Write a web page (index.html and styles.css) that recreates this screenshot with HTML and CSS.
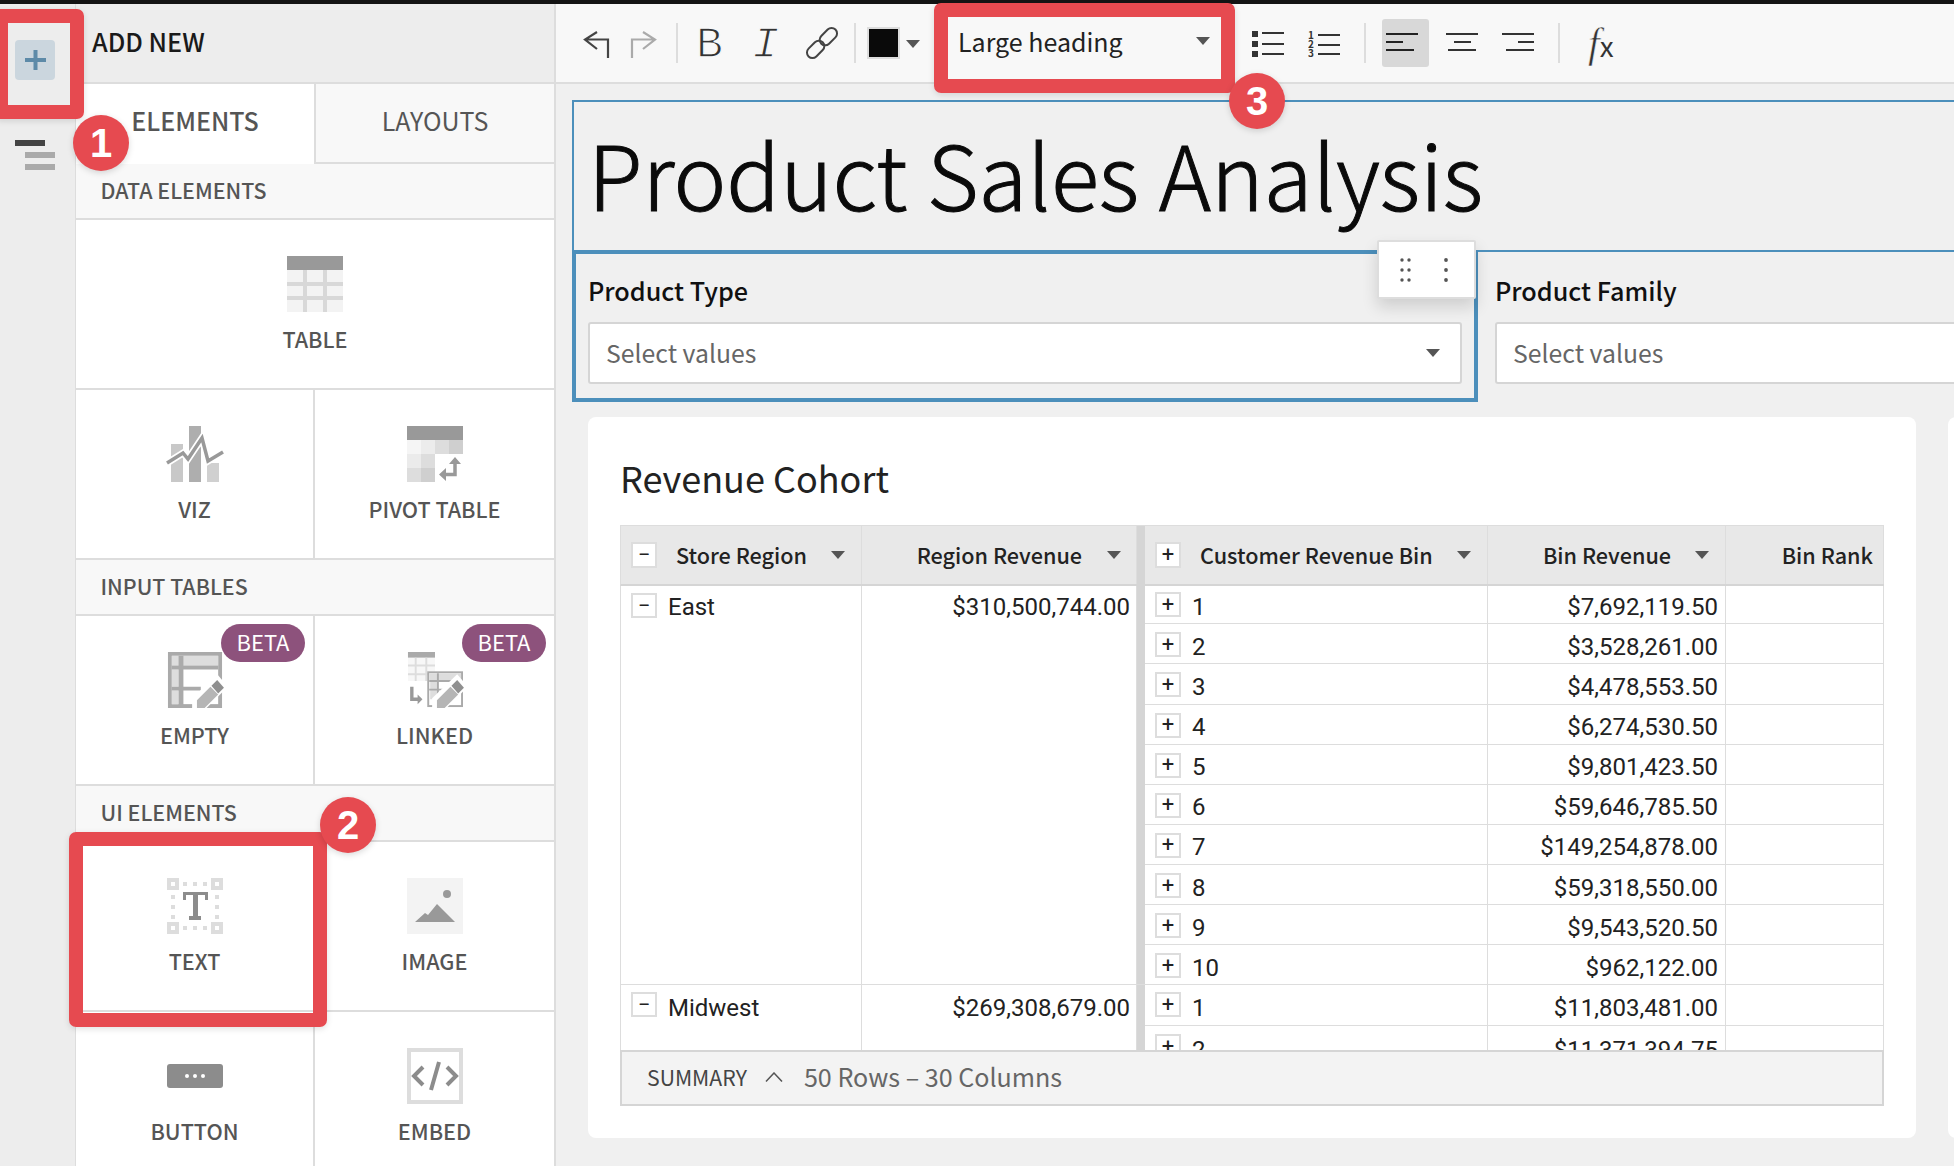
FILE: index.html
```html
<!DOCTYPE html>
<html lang="en">
<head>
<meta charset="utf-8">
<title>Product Sales Analysis</title>
<link rel="stylesheet" href="styles.css">
</head>
<body>
<div class="topbar"></div>
<div class="app">
  <nav class="rail">
    <div class="add-btn"><svg width="21" height="20" viewBox="0 0 21 20"><path d="M8.5 0h4v8h8.500v4h-8.500v8h-4v-8H0V8h8.500z" fill="#5d8aa8"/></svg></div>
    <div class="outline-icon"><span class="ol-dark"></span><span class="ol-gray"></span><span class="ol-gray"></span></div>
  </nav>
  <aside class="panel">
    <header class="panel-head">ADD NEW</header>
    <div class="tabs"><div class="tab tab-on">ELEMENTS</div><div class="tab">LAYOUTS</div></div>
    <div class="sec">DATA ELEMENTS</div>
    <div class="grid">
      <div class="cell wide">
        <svg class="ico" width="56" height="56" viewBox="0 0 56 56"><rect width="56" height="56" fill="#f3f3f3"/><rect width="56" height="14" fill="#999"/><path d="M16 14h4v42h-4zM36 14h4v42h-4zM0 26h56v4H0zM0 40h56v4H0z" fill="#d8d8d8"/></svg>
        <div class="lbl">TABLE</div>
      </div>
      <div class="cell">
        <svg class="ico" width="58" height="56" viewBox="0 0 58 56"><rect x="5" y="18" width="12" height="38" fill="#c8c8c8"/><rect x="23" width="12" height="56" fill="#aeaeae"/><rect x="41" y="37" width="12" height="19" fill="#d0d0d0"/><path d="M1 37L17 27 22 33 36 12 42 35 57 26" fill="none" stroke="#fff" stroke-width="7"/><path d="M1 37L17 27 22 33 36 12 42 35 57 26" fill="none" stroke="#999" stroke-width="3.500"/></svg>
        <div class="lbl">VIZ</div>
      </div>
      <div class="cell">
        <svg class="ico" width="56" height="56" viewBox="0 0 56 56"><rect width="56" height="14" fill="#999"/><rect y="14" width="14" height="14" fill="#f5f5f5"/><rect x="14" y="14" width="14" height="14" fill="#ececec"/><rect x="28" y="14" width="14" height="14" fill="#ddd"/><rect x="42" y="14" width="14" height="14" fill="#cfcfcf"/><rect y="28" width="14" height="14" fill="#ebebeb"/><rect x="14" y="28" width="14" height="14" fill="#ddd"/><rect y="42" width="14" height="14" fill="#ddd"/><rect x="14" y="42" width="14" height="14" fill="#cfcfcf"/><path d="M36 48.500h12V37" fill="none" stroke="#999" stroke-width="3.500"/><path d="M42 38l6-7 6 7zM39 42v13l-7-6.500z" fill="#999"/></svg>
        <div class="lbl">PIVOT TABLE</div>
      </div>
    </div>
    <div class="sec">INPUT TABLES</div>
    <div class="grid">
      <div class="cell">
        <span class="beta">BETA</span>
        <svg class="ico" width="56" height="58" viewBox="0 0 56 58"><rect x="2" y="2" width="52" height="54" fill="#fff" stroke="#aaa" stroke-width="4"/><path d="M4 4h48v10H4zM4 18h7v18H4zM4 40h7v14H4z" fill="#ddd"/><path d="M11 4h5v52h-5zM4 14h48v4H4zM4 36h30v4H4z" fill="#aaa"/><path d="M25 58V48L51 23l11 13-22 22z" fill="#fff"/><path d="M30 58v-8l14-14 8 8-14 14z" fill="#b5b5b5"/><path d="M45 35l6-6 7 8-6 6z" fill="#8f8f8f"/></svg>
        <div class="lbl">EMPTY</div>
      </div>
      <div class="cell">
        <span class="beta">BETA</span>
        <svg class="ico" width="56" height="58" viewBox="0 0 56 58"><rect width="28" height="6" fill="#aaa"/><rect y="6" width="28" height="24" fill="#f7f7f7"/><path d="M0 13h28v2H0zM0 22h28v2H0zM7 6h2v24H7zM18 6h2v24h-2z" fill="#ddd"/><path d="M4 36v13h7" fill="none" stroke="#999" stroke-width="3.500"/><path d="M10 44l5 5-5 5z" fill="#999"/><rect x="21" y="21" width="35" height="35" fill="#fff" stroke="#aaa" stroke-width="2"/><path d="M22 22h33v7H22zM23 30h7v19h-7z" fill="#ddd"/><path d="M30 22h2v34h-2zM22 38h22v2H22zM22 29h33v2H22z" fill="#aaa"/><path d="M25 58V48L51 23l11 13-22 22z" fill="#fff"/><path d="M30 58v-8l14-14 8 8-14 14z" fill="#b5b5b5"/><path d="M45 35l6-6 7 8-6 6z" fill="#8f8f8f"/></svg>
        <div class="lbl">LINKED</div>
      </div>
    </div>
    <div class="sec">UI ELEMENTS</div>
    <div class="grid">
      <div class="cell">
        <svg class="ico" width="56" height="56" viewBox="0 0 56 56"><path d="M0 0h12v12H0zM44 0h12v12H44zM0 44h12v12H0zM44 44h12v12H44z" fill="#ddd"/><path d="M4 4h4v4H4zM48 4h4v4h-4zM4 48h4v4H4zM48 48h4v4h-4z" fill="#fff"/><path d="M16 4h4v4h-4zM26 4h4v4h-4zM36 4h4v4h-4zM16 48h4v4h-4zM26 48h4v4h-4zM36 48h4v4h-4zM4 17h4v4H4zM4 27h4v4H4zM4 37h4v4H4zM48 17h4v4h-4zM48 27h4v4h-4zM48 37h4v4h-4z" fill="#ddd"/><path d="M16 14h25v3H16zM16 14h3v8h-3zM38 14h3v8h-3zM26 14h5v28h-5zM22 38h12v4H22z" fill="#8c8c8c"/></svg>
        <div class="lbl">TEXT</div>
      </div>
      <div class="cell">
        <svg class="ico" width="56" height="56" viewBox="0 0 56 56"><rect width="56" height="56" fill="#f3f3f3"/><circle cx="40" cy="16" r="4" fill="#999"/><path d="M8 44l10-9 3 2 9-11 18 18z" fill="#999"/></svg>
        <div class="lbl">IMAGE</div>
      </div>
      <div class="cell">
        <svg class="ico" width="56" height="56" viewBox="0 0 56 56"><rect y="16" width="56" height="24" rx="3" fill="#8c8c8c"/><circle cx="20" cy="28" r="2" fill="#fff"/><circle cx="28" cy="28" r="2" fill="#fff"/><circle cx="36" cy="28" r="2" fill="#fff"/></svg>
        <div class="lbl">BUTTON</div>
      </div>
      <div class="cell">
        <svg class="ico" width="56" height="56" viewBox="0 0 56 56"><rect x="2" y="2" width="52" height="52" fill="#fff" stroke="#ddd" stroke-width="4"/><path d="M16 19l-9 9 9 9M40 19l9 9-9 9M32 14l-8 28" fill="none" stroke="#8c8c8c" stroke-width="4"/></svg>
        <div class="lbl">EMBED</div>
      </div>
    </div>
  </aside>
  <main class="main">
    <div class="toolbar">
      <svg class="t-undo" width="28" height="28" viewBox="0 0 28 28"><path d="M15 2L3 9.500 15 19M3 9.500h23V28" transform="translate(0 -1)" fill="none" stroke="#444" stroke-width="2.200"/></svg>
      <svg class="t-redo" width="28" height="28" viewBox="0 0 28 28"><path d="M13 2l12 7.500L13 19M25 9.500H2V28" transform="translate(0 -1)" fill="none" stroke="#aaa" stroke-width="2.200"/></svg>
      <span class="t-sep t-sep1"></span>
      <span class="t-b">B</span>
      <span class="t-i">I</span>
      <svg class="t-link" width="36" height="36" viewBox="0 0 36 36"><g fill="none" stroke="#444" stroke-width="2" transform="rotate(-45 18 18)"><rect x="-1" y="12.500" width="20" height="11" rx="5.500"/><rect x="17" y="12.500" width="20" height="11" rx="5.500"/></g></svg>
      <span class="t-sep t-sep2"></span>
      <span class="swatch"></span><span class="caret t-caret"></span>
      <div class="heading-sel"><span>Large heading</span><span class="caret"></span></div>
      <svg class="t-ul" width="32" height="26" viewBox="0 0 32 26"><path d="M0 0h6v6H0zM0 10h6v6H0zM0 20h6v6H0z" fill="#333"/><path d="M10 1h22v2H10zM10 12h22v2H10zM10 22h22v2H10z" fill="#333"/></svg>
      <svg class="t-ol" width="32" height="28" viewBox="0 0 32 28"><text x="0" y="9" class="ol-num">1</text><text x="0" y="18" class="ol-num">2</text><text x="0" y="27" class="ol-num">3</text><path d="M10 4h22v2H10zM10 14h22v2H10zM10 23h22v2H10z" fill="#333"/></svg>
      <span class="t-sep t-sep3"></span>
      <div class="align-on"><svg width="32" height="20" viewBox="0 0 32 20"><path d="M0 0h32v2H0zM0 8h17v2H0zM0 16h28v2H0z" fill="#222"/></svg></div>
      <svg class="t-ac" width="32" height="20" viewBox="0 0 32 20"><path d="M0 0h32v2H0zM8 8h17v2H8zM2 16h28v2H2z" fill="#333"/></svg>
      <svg class="t-ar" width="32" height="20" viewBox="0 0 32 20"><path d="M0 0h32v2H0zM16 8h16v2H16zM4 16h28v2H4z" fill="#333"/></svg>
      <span class="t-sep t-sep4"></span>
      <span class="t-fx"><i>f</i><span>x</span></span>
    </div>
    <div class="canvas">
      <div class="title-box"><h1 class="title">Product Sales Analysis</h1></div>
      <div class="controls">
        <div class="ctl ctl-sel">
          <label class="ctl-label">Product Type</label>
          <div class="select"><span class="sel-t">Select values</span><span class="caret"></span></div>
          <div class="tile-menu"><svg width="95" height="55" viewBox="0 0 95 55"><g fill="#555"><circle cx="23" cy="18" r="1.700"/><circle cx="30" cy="18" r="1.700"/><circle cx="23" cy="28" r="1.700"/><circle cx="30" cy="28" r="1.700"/><circle cx="23" cy="38" r="1.700"/><circle cx="30" cy="38" r="1.700"/><circle cx="67" cy="18" r="1.900"/><circle cx="67" cy="28" r="1.900"/><circle cx="67" cy="38" r="1.900"/></g></svg></div>
        </div>
        <div class="ctl ctl-plain">
          <label class="ctl-label">Product Family</label>
          <div class="select select-long"><span class="sel-t">Select values</span></div>
        </div>
      </div>
      <div class="cards">
        <section class="card">
          <h2 class="card-title">Revenue Cohort</h2>
          <div class="tbl">
            <div class="thead">
              <div class="th c1"><span class="tog">−</span><span class="th-t">Store Region</span><span class="caret"></span></div>
              <div class="th c2"><span class="th-t">Region Revenue</span><span class="caret"></span></div>
              <div class="sep"></div>
              <div class="th c3"><span class="tog">+</span><span class="th-t">Customer Revenue Bin</span><span class="caret"></span></div>
              <div class="th c4"><span class="th-t">Bin Revenue</span><span class="caret"></span></div>
              <div class="th c5"><span class="th-t">Bin Rank</span></div>
            </div>
            <div class="tbody">
              <div class="group">
                <div class="td c1 top"><span class="tog">−</span><span class="key">East</span></div>
                <div class="td c2 top num">$310,500,744.00</div>
                <div class="sep"></div>
                <div class="rows">
                  <div class="row"><div class="td c3"><span class="tog">+</span><span class="val">1</span></div><div class="td c4 num"><span class="val">$7,692,119.50</span></div><div class="td c5"></div></div>
                  <div class="row"><div class="td c3"><span class="tog">+</span><span class="val">2</span></div><div class="td c4 num"><span class="val">$3,528,261.00</span></div><div class="td c5"></div></div>
                  <div class="row"><div class="td c3"><span class="tog">+</span><span class="val">3</span></div><div class="td c4 num"><span class="val">$4,478,553.50</span></div><div class="td c5"></div></div>
                  <div class="row"><div class="td c3"><span class="tog">+</span><span class="val">4</span></div><div class="td c4 num"><span class="val">$6,274,530.50</span></div><div class="td c5"></div></div>
                  <div class="row"><div class="td c3"><span class="tog">+</span><span class="val">5</span></div><div class="td c4 num"><span class="val">$9,801,423.50</span></div><div class="td c5"></div></div>
                  <div class="row"><div class="td c3"><span class="tog">+</span><span class="val">6</span></div><div class="td c4 num"><span class="val">$59,646,785.50</span></div><div class="td c5"></div></div>
                  <div class="row"><div class="td c3"><span class="tog">+</span><span class="val">7</span></div><div class="td c4 num"><span class="val">$149,254,878.00</span></div><div class="td c5"></div></div>
                  <div class="row"><div class="td c3"><span class="tog">+</span><span class="val">8</span></div><div class="td c4 num"><span class="val">$59,318,550.00</span></div><div class="td c5"></div></div>
                  <div class="row"><div class="td c3"><span class="tog">+</span><span class="val">9</span></div><div class="td c4 num"><span class="val">$9,543,520.50</span></div><div class="td c5"></div></div>
                  <div class="row"><div class="td c3"><span class="tog">+</span><span class="val">10</span></div><div class="td c4 num"><span class="val">$962,122.00</span></div><div class="td c5"></div></div>
                </div>
              </div>
              <div class="group">
                <div class="td c1 top"><span class="tog">−</span><span class="key">Midwest</span></div>
                <div class="td c2 top num">$269,308,679.00</div>
                <div class="sep"></div>
                <div class="rows">
                  <div class="row"><div class="td c3"><span class="tog">+</span><span class="val">1</span></div><div class="td c4 num"><span class="val">$11,803,481.00</span></div><div class="td c5"></div></div>
                  <div class="row"><div class="td c3"><span class="tog">+</span><span class="val">2</span></div><div class="td c4 num"><span class="val">$11,371,394.75</span></div><div class="td c5"></div></div>
                </div>
              </div>
            </div>
            <div class="summary"><span class="sum-l">SUMMARY</span><svg width="18" height="10" viewBox="0 0 18 10"><path d="M1 9.500L9 1l8 8.500" fill="none" stroke="#555" stroke-width="1.500"/></svg><span class="sum-c">50 Rows – 30 Columns</span></div>
          </div>
        </section>
        <section class="card card-peek"></section>
      </div>
    </div>
  </main>
</div>
<div class="mark mark1"></div>
<div class="mark mark2"></div>
<div class="mark mark3"></div>
<div class="num-badge nb1">1</div>
<div class="num-badge nb2">2</div>
<div class="num-badge nb3">3</div>
</body>
</html>
```
FILE: styles.css
```css
* { box-sizing: border-box; }
html, body { margin: 0; height: 100%; }
body {
  width: 1954px; height: 1166px; overflow: hidden; position: relative;
  background: #f0f0f0; color: #111;
  font-family: "Noto Sans CJK SC", "Noto Sans", sans-serif;
}
.topbar { height: 4px; background: #141414; }
.app { display: flex; height: 1162px; }

/* Left rail */
.rail { width: 76px; flex: none; background: #ededed; border-right: 1px solid #ddd; padding: 36px 0 0 15px; }
.add-btn { width: 40px; height: 40px; border-radius: 4px; background: #cbd6de; display: flex; align-items: center; justify-content: center; }
.outline-icon { margin-top: 60px; width: 40px; display: flex; flex-direction: column; gap: 6px; }
.ol-dark { display: block; width: 30px; height: 6px; background: #444; }
.ol-gray { display: block; width: 30px; height: 6px; margin-left: 10px; background: #aaa; }

/* Add-new panel */
.panel { width: 480px; flex: none; background: #fff; border-right: 2px solid #ddd; display: flex; flex-direction: column; overflow: hidden; }
.panel-head { height: 80px; flex: none; background: #ededed; border-bottom: 2px solid #ddd; padding: 0 0 5px 16px; display: flex; align-items: center; font-size: 25.200px; font-weight: 500; color: #1a1a1a; }
.tabs { display: flex; height: 80px; flex: none; }
.tab { flex: 1; display: flex; align-items: center; justify-content: center; padding-bottom: 6px; font-size: 25px; color: #555; background: #f8f8f8; border-bottom: 2px solid #ddd; }
.tab-on { background: #fff; border-bottom: 0; border-right: 2px solid #ddd; font-weight: 500; padding-bottom: 8px; }
.sec { height: 56px; flex: none; background: #f8f8f8; border-bottom: 2px solid #ddd; padding: 0 0 3px 24.500px; display: flex; align-items: center; font-size: 21.400px; font-weight: 500; color: #555; }
.grid { display: grid; grid-template-columns: 239px 239px; flex: none; }
.cell { position: relative; height: 170px; padding-top: 36px; display: flex; flex-direction: column; align-items: center; border-bottom: 2px solid #ddd; }
.cell:nth-child(odd) { border-right: 2px solid #ddd; }
.cell.wide { grid-column: 1 / -1; border-right: 0; }
.cell.wide ~ .cell:nth-child(even) { border-right: 2px solid #ddd; }
.cell.wide ~ .cell:nth-child(odd) { border-right: 0; }
.ico { display: block; flex: none; height: 56px; overflow: visible; }
.lbl { margin-top: 12.500px; line-height: 28px; font-size: 21.600px; font-weight: 500; color: #555; }
.beta { position: absolute; top: 8px; right: 8px; width: 84px; height: 38px; border-radius: 19px; background: #8d527c; color: #fff; font-size: 22px; line-height: 35px; text-align: center; }

/* Main */
.main { flex: 1; min-width: 0; display: flex; flex-direction: column; overflow: hidden; }
.toolbar { position: relative; height: 80px; flex: none; background: #f8f8f8; border-bottom: 2px solid #ddd; }
.toolbar > * { position: absolute; }
.t-undo { left: 26px; top: 27px; }
.t-redo { left: 74px; top: 27px; }
.t-sep { top: 19px; width: 2px; height: 40px; background: #ddd; }
.t-sep1 { left: 120px; } .t-sep2 { left: 298px; } .t-sep3 { left: 808px; } .t-sep4 { left: 1002px; }
.t-b, .t-i { font-family: "Liberation Mono", monospace; font-size: 45px; line-height: 40px; top: 22px; color: #333; -webkit-text-stroke: 1.300px #f8f8f8; }
.t-b { left: 140px; }
.t-i { left: 196px; font-style: italic; }
.t-link { left: 248px; top: 21px; }
.swatch { left: 311px; top: 23px; width: 33px; height: 32px; background: #0a0a0a; border: 2px solid #ddd; }
.t-caret { left: 350px; top: 36px; }
.caret { display: inline-block; width: 0; height: 0; border-left: 7px solid transparent; border-right: 7px solid transparent; border-top: 8px solid #555; flex: none; }
.heading-sel { left: 402px; top: 12px; width: 261px; height: 54px; display: flex; align-items: center; justify-content: space-between; padding: 0 9px 4px 0; font-size: 25px; color: #222; }
.t-ul { left: 696px; top: 27px; }
.t-ol { left: 752px; top: 26px; }
.ol-num { font-size: 10px; font-weight: 700; fill: #333; }
.align-on { left: 826px; top: 15px; width: 47px; height: 48px; background: #d8d8d8; border-radius: 3px; padding: 14px 0 0 4px; }
.align-on svg, .t-ac, .t-ar { display: block; }
.t-ac { left: 890px; top: 29px; }
.t-ar { left: 946px; top: 29px; }
.t-fx { left: 1032px; top: 19px; line-height: 40px; font-size: 34px; color: #333; white-space: nowrap; }
.t-fx i { font-family: "Liberation Serif", serif; font-size: 42px; -webkit-text-stroke: .6px #f8f8f8; }
.t-fx span { font-size: 28px; font-weight: 400; }

.canvas { flex: 1; padding: 16px 0 0 16px; overflow: hidden; }
.title-box { width: 1500px; height: 152px; border: 2px solid #4c8fbb; padding-left: 14px; }
.title { margin: 0; font-size: 89px; font-weight: 300; line-height: 142px; color: #0a0a0a; white-space: nowrap; -webkit-text-stroke: 1px #0a0a0a; }
.controls { display: flex; margin-top: -2px; }
.ctl { height: 152px; position: relative; }
.ctl-sel { width: 906px; flex: none; border: 4px solid #4c8fbb; padding: 19px 12px 0; }
.ctl-plain { flex: 1; min-width: 0; border-top: 2px solid #4c8fbb; padding: 21px 0 0 17px; }
.ctl-label { display: block; height: 49px; line-height: 34px; font-size: 25.200px; font-weight: 500; color: #111; }
.select { height: 62px; background: #fff; border: 2px solid #d5d5d5; border-radius: 3px; display: flex; align-items: center; justify-content: space-between; padding: 0 20px 0 16px; font-size: 24.800px; color: #666; }
.sel-t { padding-bottom: 2px; }
.select-long { width: 700px; }
.tile-menu { position: absolute; top: -14px; right: -2px; width: 99px; height: 59px; background: #fff; border: 2px solid #ddd; border-radius: 2px; box-shadow: 0 8px 16px rgba(0,0,0,.14); }
.tile-menu svg { display: block; }

.cards { display: flex; gap: 32px; margin-top: 15px; padding-left: 16px; }
.card { width: 1328px; height: 721px; flex: none; background: #fff; border-radius: 8px; padding: 0 32px; }
.card-peek { width: 200px; padding: 0; }
.card-title { margin: 0; height: 108px; padding-top: 32px; font-size: 36px; font-weight: 400; line-height: 57px; color: #222; }
.tbl { width: 1264px; }
.thead { display: flex; height: 61px; background: #e8e8e8; border: 1px solid #ddd; border-bottom: 2px solid #d5d5d5; border-right: 0; font-size: 21.600px; font-weight: 500; color: #222; white-space: nowrap; }
.th { display: flex; align-items: center; border-right: 1px solid #ddd; }
.th-t { padding-bottom: 2px; }
.th.c1 { padding-left: 10px; }
.th.c1 .tog { margin-right: 19px; }
.th.c1 .caret { margin-left: 24px; }
.th.c2 { justify-content: flex-end; padding-right: 15px; }
.th.c2 .caret { margin-left: 25px; }
.th.c3 { padding-left: 10px; }
.th.c3 .tog { margin-right: 19px; }
.th.c3 .caret { margin-left: 24px; }
.th.c4 { justify-content: flex-end; padding-right: 16px; }
.th.c4 .caret { margin-left: 24px; }
.th.c5 { justify-content: flex-end; padding-right: 10px; }
.c1 { width: 241px; flex: none; }
.c2 { width: 275px; flex: none; }
.c3 { width: 342.500px; flex: none; }
.c4 { width: 238.500px; flex: none; }
.c5 { flex: 1; }
.sep { width: 8px; flex: none; background: #d5d5d5; }
.tog { width: 26px; height: 25px; flex: none; background: #fff; border: 2px solid #ddd; display: inline-flex; align-items: center; justify-content: center; font: 400 22px/1 "Roboto", sans-serif; color: #222; }
.thead .tog { height: 26px; }
.tbody { height: 464px; overflow: hidden; border-left: 1px solid #ddd; border-right: 1px solid #ddd; font: 400 24px/1 "Roboto", sans-serif; color: #222; }
.group { display: flex; border-bottom: 1px solid #ddd; }
.td { display: flex; align-items: center; }
.top { align-items: flex-start; border-right: 1px solid #ddd; padding-top: 7px; }
.td.c1 { padding-left: 10px; }
.key { margin-left: 11px; line-height: 28px; }
.num { justify-content: flex-end; padding-right: 7px; }
.top.num { line-height: 28px; padding-right: 6px; }
.group + .group .key { padding-top: 2px; }
.group + .group .top.num { padding-top: 9px; }
.val { padding-top: 4px; }
.group + .group .val { padding-top: 6px; }
.rows { flex: 1; min-width: 0; }
.row { display: flex; height: 40.140px; border-bottom: 1px solid #ddd; }
.row:last-child { border-bottom: 0; height: 39.140px; }
.group:first-child .row:first-child { height: 38.300px; }
.group:last-child .row:last-child { height: 40px; }
.row + .row .td.c3, .row + .row .td.c4 { padding-top: 2px; }
.row .c3 { padding-left: 10px; gap: 11px; border-right: 1px solid #ddd; }
.row .c4 { border-right: 1px solid #ddd; }
.summary { height: 56px; background: #f3f3f3; border: 2px solid #d5d5d5; display: flex; align-items: center; padding: 0 0 0 25px; font-size: 25.100px; color: #666; }
.sum-l { font-size: 21.200px; color: #444; margin-right: 20.500px; padding-bottom: 4px; }
.sum-c { margin-left: 20.500px; padding-bottom: 4px; }
.summary svg { margin-top: -3px; margin-left: -2px; }

/* Annotations over the screenshot */
.mark { position: absolute; border: 14px solid #e64a50; border-radius: 7px; box-shadow: 0 2px 6px rgba(0,0,0,.12); }
.mark1 { left: -6px; top: 9px; width: 90px; height: 110px; }
.mark2 { left: 69px; top: 832px; width: 258px; height: 195px; }
.mark3 { left: 934px; top: 3px; width: 301px; height: 90px; }
.num-badge { position: absolute; width: 56px; height: 56px; border-radius: 50%; background: #e64a50; color: #fff; font: 700 40px/56px "Liberation Sans", sans-serif; text-align: center; box-shadow: 0 2px 6px rgba(0,0,0,.15); }
.nb1 { left: 73px; top: 115px; }
.nb2 { left: 320px; top: 797px; }
.nb3 { left: 1229px; top: 73px; }
```
